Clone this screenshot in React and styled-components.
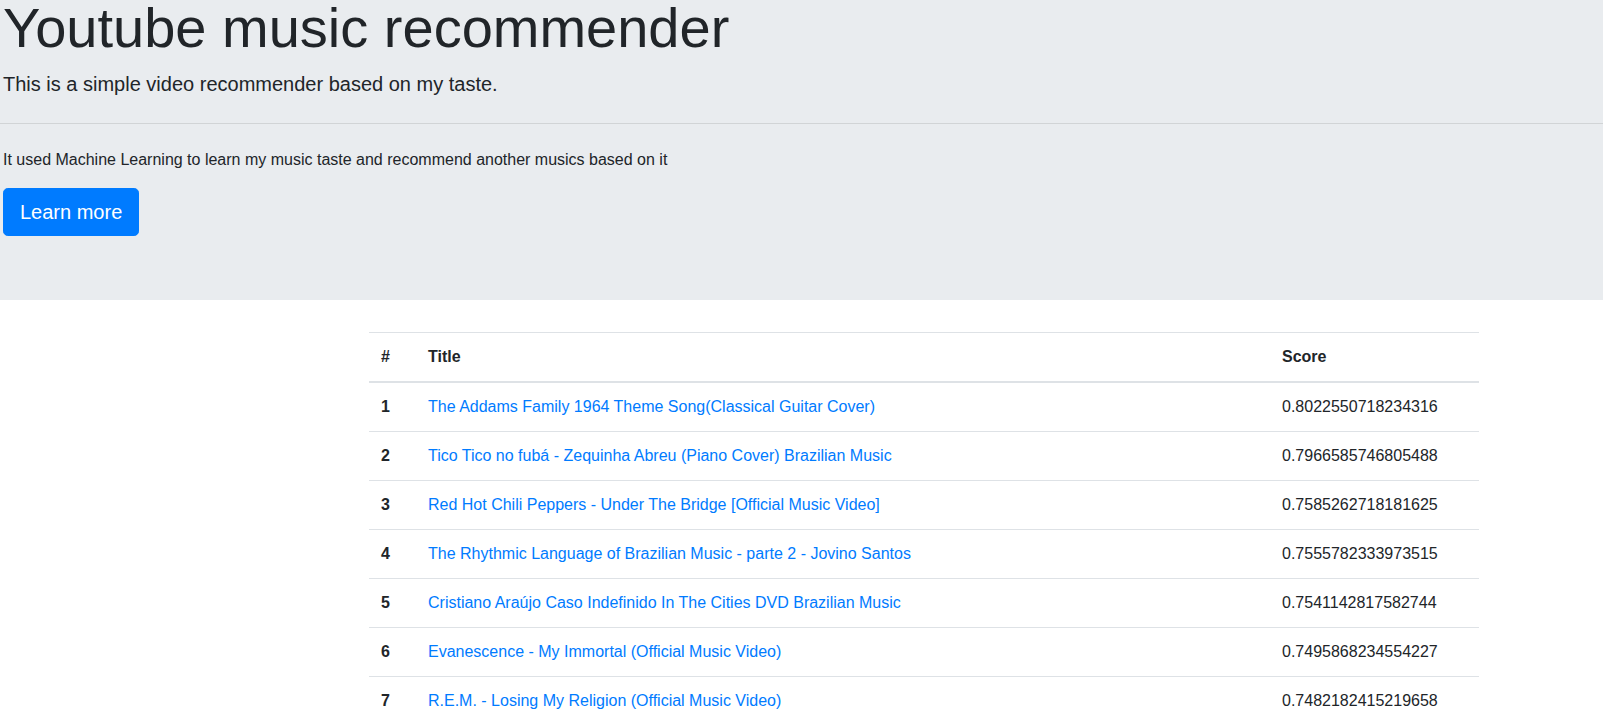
import React from 'react';
import styled, { createGlobalStyle } from 'styled-components';

const GlobalStyle = createGlobalStyle`
  body {
    margin: 0;
    font-family: 'Liberation Sans', Arial, 'Helvetica Neue', sans-serif;
    font-size: 16px;
    line-height: 1.5;
    color: #212529;
    background: #fff;
  }
`;

const Jumbotron = styled.div`
  background-color: #e9ecef;
  padding: 0 3px 64px 3px;
  margin-bottom: 32px;
  overflow: hidden;
`;

const Heading = styled.h1`
  font-size: 56px;
  font-weight: 300;
  line-height: 1;
  margin: 0 0 13px 0;
`;

const Lead = styled.p`
  font-size: 20px;
  font-weight: 300;
  margin: 0 0 16px 0;
`;

const Divider = styled.hr`
  border: 0;
  border-top: 1px solid rgba(0, 0, 0, 0.1);
  margin: 24px -3px;
`;

const Text = styled.p`
  margin: 0 0 16px 0;
`;

const Button = styled.a`
  display: inline-block;
  background-color: #007bff;
  border: 1px solid #007bff;
  color: #fff;
  font-size: 20px;
  line-height: 1.5;
  padding: 8px 16px;
  border-radius: 4.8px;
  text-decoration: none;
`;

const TableWrap = styled.div`
  padding: 0 124px 0 369px;
`;

const Table = styled.table`
  width: 1110px;
  border-collapse: collapse;
  table-layout: fixed;
`;

const Cell = styled.td`
  padding: 12px;
  border-top: 1px solid #dee2e6;
  vertical-align: top;
  font-weight: ${(p) => (p.$bold ? 700 : 400)};
  text-align: left;
`;

const HeadCell = styled.th`
  padding: 12px;
  border-top: 1px solid #dee2e6;
  border-bottom: 2px solid #dee2e6;
  vertical-align: bottom;
  text-align: left;
  font-weight: 700;
`;

const Link = styled.a`
  color: #007bff;
  text-decoration: none;
`;

const videos = [
  ['The Addams Family 1964 Theme Song(Classical Guitar Cover)', '0.8022550718234316'],
  ['Tico Tico no fubá - Zequinha Abreu (Piano Cover) Brazilian Music', '0.7966585746805488'],
  ['Red Hot Chili Peppers - Under The Bridge [Official Music Video]', '0.7585262718181625'],
  ['The Rhythmic Language of Brazilian Music - parte 2 - Jovino Santos', '0.7555782333973515'],
  ['Cristiano Araújo Caso Indefinido In The Cities DVD Brazilian Music', '0.7541142817582744'],
  ['Evanescence - My Immortal (Official Music Video)', '0.7495868234554227'],
  ['R.E.M. - Losing My Religion (Official Music Video)', '0.7482182415219658'],
];

function App() {
  return (
    <>
      <GlobalStyle />
      <Jumbotron>
        <Heading>Youtube music recommender</Heading>
        <Lead>This is a simple video recommender based on my taste.</Lead>
        <Divider />
        <Text>It used Machine Learning to learn my music taste and recommend another musics based on it</Text>
        <Button href='#'>Learn more</Button>
      </Jumbotron>
      <TableWrap>
        <Table>
          <colgroup>
            <col style={{ width: '47px' }} />
            <col style={{ width: '854px' }} />
            <col style={{ width: '209px' }} />
          </colgroup>
          <thead>
            <tr>
              <HeadCell>#</HeadCell>
              <HeadCell>Title</HeadCell>
              <HeadCell>Score</HeadCell>
            </tr>
          </thead>
          <tbody>
            {videos.map((v, i) => (
              <tr key={i}>
                <Cell $bold>{i + 1}</Cell>
                <Cell>
                  <Link href='#'>{v[0]}</Link>
                </Cell>
                <Cell>{v[1]}</Cell>
              </tr>
            ))}
          </tbody>
        </Table>
      </TableWrap>
    </>
  );
}

export default App;
